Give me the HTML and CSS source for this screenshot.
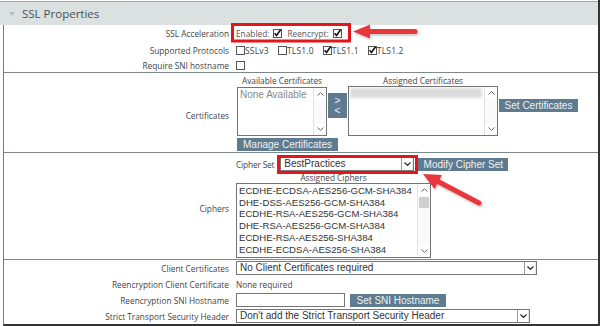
FILE: index.html
```html
<!DOCTYPE html>
<html>
<head>
<meta charset="utf-8">
<link rel="stylesheet" href="styles.css">
</head>
<body>
<div class="panel">
  <div class="hdr"><span class="tri"></span>SSL Properties</div>
  <div class="body">
    <div class="sec s1">
      <div class="lbl">SSL Acceleration</div>
      <div class="val">
        <span class="opt">Enabled:</span>
        <svg class="cb cb-a" width="9" height="9" viewBox="0 0 9 9"><rect x="0.5" y="0.5" width="8" height="8" fill="#fff" stroke="#555"/><path d="M1.6 4.2 L3.5 6.4 L7.6 0.8" fill="none" stroke="#111" stroke-width="1.6"/></svg>
        <span class="opt opt-b">Reencrypt:</span>
        <svg class="cb cb-a" width="9" height="9" viewBox="0 0 9 9"><rect x="0.5" y="0.5" width="8" height="8" fill="#fff" stroke="#555"/><path d="M1.6 4.2 L3.5 6.4 L7.6 0.8" fill="none" stroke="#111" stroke-width="1.6"/></svg>
      </div>
      <div class="lbl">Supported Protocols</div>
      <div class="val">
        <svg class="cb" width="9" height="9" viewBox="0 0 9 9"><rect x="0.5" y="0.5" width="8" height="8" fill="#fff" stroke="#555"/></svg><span class="proto">SSLv3</span>
        <svg class="cb" width="9" height="9" viewBox="0 0 9 9"><rect x="0.5" y="0.5" width="8" height="8" fill="#fff" stroke="#555"/></svg><span class="proto">TLS1.0</span>
        <svg class="cb" width="9" height="9" viewBox="0 0 9 9"><rect x="0.5" y="0.5" width="8" height="8" fill="#fff" stroke="#555"/><path d="M1.6 4.2 L3.5 6.4 L7.6 0.8" fill="none" stroke="#111" stroke-width="1.6"/></svg><span class="proto">TLS1.1</span>
        <svg class="cb" width="9" height="9" viewBox="0 0 9 9"><rect x="0.5" y="0.5" width="8" height="8" fill="#fff" stroke="#555"/><path d="M1.6 4.2 L3.5 6.4 L7.6 0.8" fill="none" stroke="#111" stroke-width="1.6"/></svg><span class="proto">TLS1.2</span>
      </div>
      <div class="lbl">Require SNI hostname</div>
      <div class="val">
        <svg class="cb" width="9" height="9" viewBox="0 0 9 9"><rect x="0.5" y="0.5" width="8" height="8" fill="#fff" stroke="#555"/></svg>
      </div>
    </div>

    <div class="sec s2">
      <div class="lbl lbl-low">Certificates</div>
      <div class="val-col">
        <div class="certs">
          <div class="cap c-avail">Available Certificates</div>
          <div class="cap c-assigned">Assigned Certificates</div>
          <div class="list l-avail">
            <div class="items"><div class="muted">None Available</div></div>
            <div class="sb">
              <span class="sb-btn"><svg width="7" height="4" viewBox="0 0 7 4"><path d="M0.5 3.5 L3.5 0.6 L6.5 3.5" fill="none" stroke="#666"/></svg></span>
              <span class="sb-track"></span>
              <span class="sb-btn"><svg width="7" height="4" viewBox="0 0 7 4"><path d="M0.5 0.5 L3.5 3.4 L6.5 0.5" fill="none" stroke="#666"/></svg></span>
            </div>
          </div>
          <div class="btn move"><span>&gt;</span><span>&lt;</span></div>
          <div class="list l-assigned">
            <div class="items"><div class="blur"></div></div>
            <div class="sb">
              <span class="sb-btn"><svg width="7" height="4" viewBox="0 0 7 4"><path d="M0.5 3.5 L3.5 0.6 L6.5 3.5" fill="none" stroke="#666"/></svg></span>
              <span class="sb-track"></span>
              <span class="sb-btn"><svg width="7" height="4" viewBox="0 0 7 4"><path d="M0.5 0.5 L3.5 3.4 L6.5 0.5" fill="none" stroke="#666"/></svg></span>
            </div>
          </div>
          <div class="btn b-setcert">Set Certificates</div>
        </div>
        <div class="btn b-manage">Manage Certificates</div>
      </div>
    </div>

    <div class="sec s3">
      <div class="lbl lbl-low">Ciphers</div>
      <div class="val-col">
        <div class="cset">
          <span class="opt opt-cs">Cipher Set</span>
          <div class="sel s-cipher"><span class="sel-text">BestPractices</span><span class="sel-btn"><svg width="7" height="4" viewBox="0 0 7 4"><path d="M0.5 0.5 L3.5 3.4 L6.5 0.5" fill="none" stroke="#222" stroke-width="1.2"/></svg></span></div>
          <div class="btn b-modify">Modify Cipher Set</div>
        </div>
        <div class="cap c-ciphers">Assigned Ciphers</div>
        <div class="list l-ciphers">
          <div class="items">
            <div>ECDHE-ECDSA-AES256-GCM-SHA384</div>
            <div>DHE-DSS-AES256-GCM-SHA384</div>
            <div>ECDHE-RSA-AES256-GCM-SHA384</div>
            <div>DHE-RSA-AES256-GCM-SHA384</div>
            <div>ECDHE-RSA-AES256-SHA384</div>
            <div>ECDHE-ECDSA-AES256-SHA384</div>
          </div>
          <div class="sb">
            <span class="sb-btn"><svg width="7" height="4" viewBox="0 0 7 4"><path d="M0.5 3.5 L3.5 0.6 L6.5 3.5" fill="none" stroke="#666"/></svg></span>
            <span class="sb-thumb"></span>
            <span class="sb-track"></span>
            <span class="sb-btn"><svg width="7" height="4" viewBox="0 0 7 4"><path d="M0.5 0.5 L3.5 3.4 L6.5 0.5" fill="none" stroke="#666"/></svg></span>
          </div>
        </div>
      </div>
    </div>

    <div class="sec s4">
      <div class="lbl">Client Certificates</div>
      <div class="val">
        <div class="sel s-client"><span class="sel-text">No Client Certificates required</span><span class="sel-btn"><svg width="7" height="4" viewBox="0 0 7 4"><path d="M0.5 0.5 L3.5 3.4 L6.5 0.5" fill="none" stroke="#222" stroke-width="1.2"/></svg></span></div>
      </div>
      <div class="lbl">Reencryption Client Certificate</div>
      <div class="val"><span class="opt plain">None required</span></div>
      <div class="lbl">Reencryption SNI Hostname</div>
      <div class="val">
        <div class="input"></div>
        <div class="btn b-sni">Set SNI Hostname</div>
      </div>
      <div class="lbl">Strict Transport Security Header</div>
      <div class="val">
        <div class="sel s-hsts"><span class="sel-text">Don't add the Strict Transport Security Header</span><span class="sel-btn"><svg width="7" height="4" viewBox="0 0 7 4"><path d="M0.5 0.5 L3.5 3.4 L6.5 0.5" fill="none" stroke="#222" stroke-width="1.2"/></svg></span></div>
      </div>
    </div>
  </div>

  <svg class="marks" width="600" height="326" viewBox="0 0 600 326">
    <defs>
      <filter id="sh" x="-20%" y="-20%" width="140%" height="140%">
        <feDropShadow dx="1" dy="1.5" stdDeviation="1" flood-color="#000" flood-opacity="0.25"/>
      </filter>
    </defs>
    <rect x="232.5" y="24.5" width="117" height="16.5" fill="none" stroke="#e8141c" stroke-width="3"/>
    <rect x="278.5" y="156.5" width="138" height="16" fill="none" stroke="#e8141c" stroke-width="3"/>
    <g filter="url(#sh)" fill="#e8383e" stroke="#e8383e">
      <line x1="368" y1="31.5" x2="415" y2="31.5" stroke-width="5" stroke-linecap="round"/>
      <polygon points="353,31.5 370,24.5 370,38.5" stroke="none"/>
      <line x1="437" y1="181" x2="479" y2="203" stroke-width="5" stroke-linecap="round"/>
      <polygon points="423,174 434.5,189 441.8,174.9" stroke="none"/>
    </g>
  </svg>
</div>
</body>
</html>
```

FILE: styles.css
```css
* { box-sizing: border-box; }
body {
  margin: 0;
  background: #fff;
  font-family: "Open Sans", "DejaVu Sans", sans-serif;
  color: #444;
}
.panel {
  position: relative;
  width: 600px;
  height: 326px;
  padding-top: 1px;
  border-right: 2px solid #333;
}
.hdr {
  height: 24px;
  border-top: 1px solid #9ba7ab;
  background: #dbe0e0;
  display: flex;
  align-items: center;
  padding-left: 9px;
  font-size: 11.5px;
  color: #46535a;
}
.tri {
  width: 0;
  height: 0;
  border-left: 3.5px solid transparent;
  border-right: 3.5px solid transparent;
  border-top: 4px solid #b7bfc2;
  margin-right: 7px;
}
.body {
  margin-left: 3px;
  border-left: 1px solid #6f7d82;
  border-bottom: 2px solid #333;
}
.sec {
  display: grid;
  grid-template-columns: 225px 1fr;
  column-gap: 7px;
  border-bottom: 1px solid #7b888c;
}
.s1 { grid-template-rows: 17px 16px 14px; }
.s4 { grid-template-rows: 16px 16px 16px 16px; border-bottom: none; }
.lbl {
  text-align: right;
  font-size: 8.3px;
  color: #444;
  align-self: center;
  white-space: nowrap;
}
.lbl-low { margin-top: 5px; }
.val {
  display: flex;
  align-items: center;
  white-space: nowrap;
}
.opt { font-size: 8.3px; color: #555; }
.opt.plain { color: #444; }
.opt-cs { letter-spacing: -0.15px; color: #444; }
.cb { display: block; flex: none; }
.cb-a { margin-left: 4px; }
.opt-b { margin-left: 5px; }
.proto {
  font-size: 8.5px;
  letter-spacing: 0.2px;
  color: #444;
  margin-right: 9px;
}

/* certificates */
.val-col { display: flex; flex-direction: column; align-items: flex-start; }
.s2 .val-col { padding: 3px 0 1px 1px; }
.certs {
  display: grid;
  grid-template-columns: 90px 19px 150px auto;
  grid-template-rows: 10px 50px;
  column-gap: 1px;
}
.cap {
  font-size: 8.3px;
  color: #444;
  text-align: center;
  line-height: 10px;
  white-space: nowrap;
}
.c-avail { grid-column: 1; grid-row: 1; }
.c-assigned { grid-column: 3; grid-row: 1; }
.list {
  display: flex;
  border: 1px solid #747474;
  background: #fff;
}
.l-avail { grid-column: 1; grid-row: 2; margin-top: 1px; height: 49px; }
.l-assigned { grid-column: 3; grid-row: 2; height: 50px; }
.items {
  flex: 1;
  min-width: 0;
  padding: 1px 2px;
  font-family: "Liberation Sans", Arial, sans-serif;
  font-size: 10px;
  line-height: 11.7px;
  color: #333;
  white-space: nowrap;
  overflow: hidden;
}
.muted { color: #8a8a8a; }
.blur {
  height: 10px;
  margin: 0 0 0 -1px;
  background: #dcdcdc;
  filter: blur(1.5px);
}
.sb {
  width: 13px;
  flex: none;
  display: flex;
  flex-direction: column;
  border-left: 1px solid #e2e2e2;
  background: #fafafa;
}
.sb-btn {
  height: 12px;
  display: flex;
  align-items: center;
  justify-content: center;
  background: #fff;
}
.sb-btn svg { display: block; }
.sb-track { flex: 1; }
.sb-thumb {
  height: 11px;
  margin: 1px 1px 0;
  background: #cfcfcf;
}
.btn {
  background: #5e7b8f;
  color: #eef2f4;
  font-family: "Liberation Sans", Arial, sans-serif;
  font-size: 10px;
  height: 13px;
  line-height: 13px;
  text-align: center;
  white-space: nowrap;
}
.move {
  grid-column: 2;
  grid-row: 2;
  margin-top: 7px;
  height: 25px;
  display: flex;
  flex-direction: column;
  justify-content: center;
  line-height: 10px;
  font-size: 10px;
}
.b-setcert { grid-column: 4; grid-row: 2; margin-top: 13px; width: 79px; }
.b-manage { margin-top: 2px; width: 101px; }

/* ciphers */
.s3 .val-col { padding: 4px 0 1px 0; }
.cset {
  display: flex;
  align-items: center;
  height: 14px;
}
.sel {
  display: flex;
  height: 14px;
  border: 1px solid #767676;
  background: #fff;
}
.sel-text {
  flex: 1;
  min-width: 0;
  padding-left: 3px;
  font-family: "Liberation Sans", Arial, sans-serif;
  font-size: 10px;
  line-height: 12px;
  color: #333;
  white-space: nowrap;
  overflow: hidden;
}
.sel-btn {
  width: 12px;
  flex: none;
  display: flex;
  align-items: center;
  justify-content: center;
  border-left: 1px solid #9a9a9a;
  border-right: 1px solid #e6e6e6;
}
.sel-btn svg { display: block; }
.s-cipher { width: 134px; margin-left: 6px; }
.b-modify { width: 90px; margin-left: 4px; }
.c-ciphers { width: 195px; height: 12px; line-height: 13px; }
.l-ciphers { width: 195px; height: 75px; }
.l-ciphers .items { padding: 1px 1px 0 2px; font-size: 9.6px; }

/* last section */
.s-client { width: 301px; }
.s-hsts { width: 294px; }
.input {
  width: 109px;
  height: 14px;
  border: 1px solid #767676;
  background: #fff;
}
.b-sni { width: 96px; margin-left: 5px; }

.marks {
  position: absolute;
  left: 0;
  top: 0;
  pointer-events: none;
}
```
